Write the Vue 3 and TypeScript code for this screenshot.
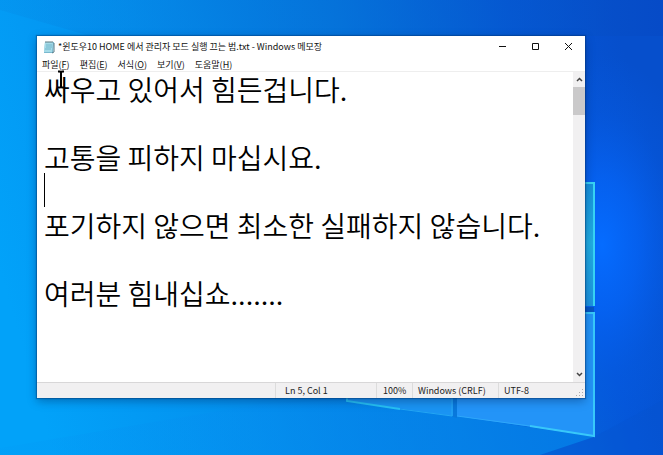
<script setup lang="ts">
import { ref } from 'vue'

interface MenuEntry {
  label: string
  key: string
}

const title = '*윈도우10 HOME 에서 관리자 모드 실행 끄는 범.txt - Windows 메모장'

const menus: MenuEntry[] = [
  { label: '파일', key: 'F' },
  { label: '편집', key: 'E' },
  { label: '서식', key: 'O' },
  { label: '보기', key: 'V' },
  { label: '도움말', key: 'H' },
]

const content = ref(
  [
    '싸우고 있어서 힘든겁니다.',
    '',
    '고통을 피하지 마십시요.',
    '',
    '포기하지 않으면 최소한 실패하지 않습니다.',
    '',
    '여러분 힘내십쇼.......',
  ].join('\n'),
)
</script>

<template>
  <main class="desktop">
    <svg class="wallpaper" viewBox="0 0 663 455" preserveAspectRatio="none" aria-hidden="true">
      <defs>
        <linearGradient id="base" x1="0" y1="0.6" x2="1" y2="0.4">
          <stop offset="0" stop-color="#02a2f9" />
          <stop offset="0.3" stop-color="#0490ee" />
          <stop offset="0.6" stop-color="#0577e0" />
          <stop offset="0.85" stop-color="#0556d8" />
          <stop offset="1" stop-color="#064fcc" />
        </linearGradient>
        <radialGradient id="glow" gradientUnits="userSpaceOnUse" cx="602" cy="245" r="190" gradientTransform="translate(271 0) scale(0.55 1)">
          <stop offset="0" stop-color="#056cff" />
          <stop offset="0.35" stop-color="#0566fa" stop-opacity="0.7" />
          <stop offset="0.7" stop-color="#0560ee" stop-opacity="0.25" />
          <stop offset="1" stop-color="#0560ee" stop-opacity="0" />
        </radialGradient>
        <linearGradient id="topshade" x1="0" y1="0" x2="1" y2="0">
          <stop offset="0" stop-color="#0588e4" stop-opacity="0.25" />
          <stop offset="0.5" stop-color="#056ed4" stop-opacity="0.5" />
          <stop offset="1" stop-color="#0648c4" stop-opacity="0.6" />
        </linearGradient>
        <linearGradient id="lowbeam" x1="0" y1="0" x2="1" y2="0">
          <stop offset="0" stop-color="#0597f4" stop-opacity="0.15" />
          <stop offset="1" stop-color="#0580e8" stop-opacity="0.8" />
        </linearGradient>
        <linearGradient id="pane" x1="0" y1="0" x2="0" y2="1">
          <stop offset="0" stop-color="#168fdc" />
          <stop offset="0.5" stop-color="#20aee2" />
          <stop offset="1" stop-color="#1c94e0" />
        </linearGradient>
      </defs>
      <rect width="663" height="455" fill="url(#base)" />
      <path d="M0 10L90 36H663V0H0Z" fill="url(#topshade)" />
      <path d="M0 448L260 404L350 400L594 437L540 455H0Z" fill="url(#lowbeam)" />
      <path d="M594 437L663 400V455H540Z" fill="#0552cc" opacity="0.3" />
      <rect x="490" y="50" width="173" height="405" fill="url(#glow)" />
      <path d="M456 180L594 183V306H456Z" fill="url(#pane)" />
      <path d="M456 312H594V436L456 416Z" fill="#2394f8" />
      <path d="M347 312H453V416L347 401Z" fill="#1a94f3" />
      <path d="M585 307H594V312H585Z" fill="#0556c4" />
      <path d="M453 398H457V418L453 417Z" fill="#0878dc" />
      <path d="M580 183H594V306" fill="none" stroke="#38d4f4" stroke-width="2" />
      <path d="M580 313H594V436L530 426" fill="none" stroke="#38c8fa" stroke-width="2" />
      <path d="M530 426L457 416" fill="none" stroke="#2ea8fa" />
      <path d="M347 398V401L400 409" fill="none" stroke="#27c2f5" stroke-width="2" />
      <path d="M400 409L452 416V398" fill="none" stroke="#24a6f4" />
    </svg>

    <section class="window" aria-label="메모장">
      <header class="titlebar">
        <svg class="app-icon" viewBox="0 0 12 14" aria-hidden="true">
          <path d="M2 2H11L10 13H1Z" fill="#79b9cf" />
          <path d="M2 2H10L9 12H1Z" fill="#a5dbe8" />
          <path d="M11 3V12L9 13" fill="none" stroke="#557986" />
          <path d="M3 5H9M3 7H9M2 9H8" stroke="#72b6cb" />
          <path d="M3 1V3M5 1V3M7 1V3M9 1V3" stroke="#5d7880" />
        </svg>
        <h1 class="title">{{ title }}</h1>
        <div class="controls">
          <button type="button" aria-label="최소화">
            <svg viewBox="0 0 9 9"><path d="M1 4.5H8" /></svg>
          </button>
          <button type="button" aria-label="최대화">
            <svg viewBox="0 0 9 9"><path d="M1.5 1.5H7.5V7.5H1.5Z" /></svg>
          </button>
          <button type="button" aria-label="닫기">
            <svg viewBox="0 0 9 9"><path d="M1 1L8 8M8 1L1 8" /></svg>
          </button>
        </div>
      </header>

      <nav class="menubar">
        <button v-for="menu in menus" :key="menu.key" type="button">
          {{ menu.label }}(<u>{{ menu.key }}</u>)
        </button>
      </nav>

      <div class="editor">
        <textarea v-model="content" aria-label="텍스트 편집" spellcheck="false"></textarea>
        <span class="caret"></span>
        <svg class="pointer" viewBox="0 0 8 19" aria-hidden="true">
          <path d="M1 1.5H3L4 2.5L5 1.5H7M4 2V17M1 17.5H3L4 16.5L5 17.5H7" />
        </svg>
        <div class="scrollbar">
          <button type="button" aria-label="위로">
            <svg viewBox="0 0 7 5"><path d="M1 4L3.5 1.5L6 4" /></svg>
          </button>
          <div class="track"><div class="thumb"></div></div>
          <button type="button" aria-label="아래로">
            <svg viewBox="0 0 7 5"><path d="M1 1L3.5 3.5L6 1" /></svg>
          </button>
        </div>
      </div>

      <footer class="statusbar">
        <span class="position">Ln 5, Col 1</span>
        <span class="zoom">100%</span>
        <span class="ending">Windows (CRLF)</span>
        <span class="encoding">UTF-8</span>
        <svg class="grip" viewBox="0 0 8 8" aria-hidden="true">
          <path d="M6 0h1v1h-1zM3 3h1v1h-1zM6 3h1v1h-1zM0 6h1v1h-1zM3 6h1v1h-1zM6 6h1v1h-1z" />
        </svg>
      </footer>
    </section>
  </main>
</template>

<style>
body {
  margin: 0;
}
</style>

<style scoped>
.desktop {
  position: relative;
  display: flex;
  box-sizing: border-box;
  min-height: 100vh;
  padding: 36px 78px 57px 37px;
  overflow: hidden;
  background: #0583e8;
  font-family: 'Noto Sans CJK KR', sans-serif;
  color: #111;
}

.wallpaper {
  position: absolute;
  inset: 0;
  width: 100%;
  height: 100%;
}

.window {
  position: relative;
  display: flex;
  flex: 1;
  flex-direction: column;
  min-width: 0;
  background: #fff;
  box-shadow: 0 0 1px 1px rgba(0, 50, 110, 0.4), 0 3px 9px rgba(0, 30, 80, 0.4);
}

button {
  display: flex;
  align-items: center;
  justify-content: center;
  margin: 0;
  padding: 0;
  border: 0;
  background: none;
  color: inherit;
  font: inherit;
}

.titlebar {
  display: flex;
  align-items: center;
  height: 21px;
  padding-left: 6px;
}

.app-icon {
  flex: none;
  width: 12px;
  height: 14px;
  margin-right: 3px;
}

.title {
  flex: 1;
  margin: 0;
  font-size: 9px;
  font-weight: 400;
  line-height: 20px;
  white-space: nowrap;
}

.controls {
  display: flex;
}

.controls button {
  width: 33px;
  height: 21px;
}

.controls svg {
  width: 9px;
  height: 9px;
  fill: none;
  stroke: #111;
}

.menubar {
  display: flex;
  gap: 10px;
  height: 14px;
  padding-left: 5px;
  border-bottom: 1px solid #eee;
  font-size: 9px;
  line-height: 16px;
}

.menubar button {
  display: block;
  white-space: nowrap;
}

.menubar u {
  text-decoration-color: #888;
  text-underline-offset: 1px;
}

.editor {
  position: relative;
  display: flex;
  flex: 1;
}

textarea {
  flex: 1;
  min-width: 0;
  margin: 0;
  padding: 0 0 0 7px;
  overflow: hidden;
  border: 0;
  outline: 0;
  resize: none;
  background: #fff;
  color: #000;
  font-family: 'Noto Sans CJK KR', sans-serif;
  font-size: 28px;
  font-weight: 350;
  line-height: 34px;
}

.caret {
  position: absolute;
  top: 101px;
  left: 7px;
  width: 1px;
  height: 34px;
  background: #000;
}

.pointer {
  position: absolute;
  top: -2px;
  left: 20px;
  width: 8px;
  height: 19px;
  fill: none;
  stroke: #000;
  stroke-width: 2;
}

.scrollbar {
  display: flex;
  flex-direction: column;
  width: 12px;
  background: #f1f0f1;
}

.scrollbar button {
  height: 15px;
}

.scrollbar svg {
  width: 7px;
  height: 5px;
  fill: none;
  stroke: #444;
  stroke-width: 1.5;
}

.track {
  flex: 1;
}

.thumb {
  height: 28px;
  background: #cac9ca;
}

.statusbar {
  position: relative;
  display: flex;
  justify-content: flex-end;
  box-sizing: border-box;
  height: 16px;
  border-top: 1px solid #d8d7d8;
  background: #f1f0f1;
  font-size: 9px;
  line-height: 15px;
  color: #222;
}

.statusbar span {
  box-sizing: border-box;
  border-left: 1px solid #dcdcdc;
  white-space: nowrap;
}

.position {
  width: 101px;
  padding-left: 9px;
}

.zoom {
  width: 36px;
  padding-left: 6px;
}

.ending {
  width: 86px;
  padding-left: 5px;
}

.encoding {
  width: 87px;
  padding-left: 5px;
}

.grip {
  position: absolute;
  right: 1px;
  bottom: 1px;
  width: 8px;
  height: 8px;
  fill: #aaa;
}
</style>
